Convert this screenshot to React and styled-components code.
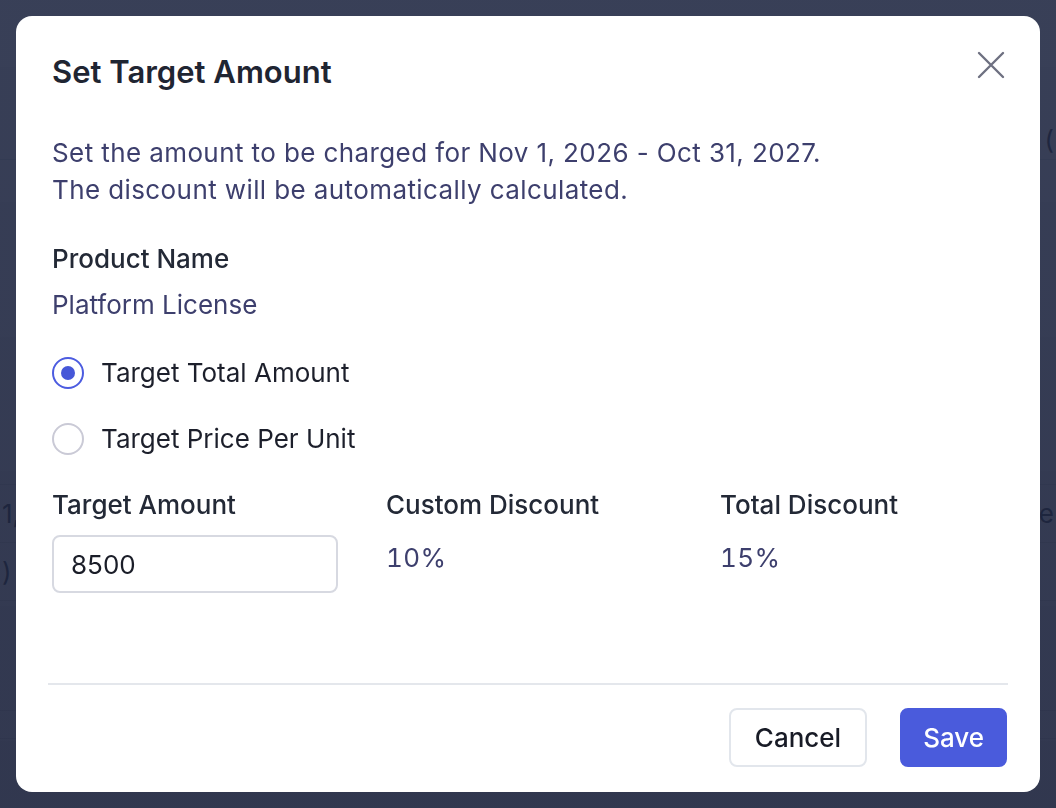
import React, { useState } from "react";
import styled, { createGlobalStyle } from "styled-components";

const GlobalStyle = createGlobalStyle`
  html, body {
    margin: 0;
    padding: 0;
    height: 100%;
  }
  body {
    font-family: Inter, "Noto Sans", "Liberation Sans", sans-serif;
    background: #f5f6f8;
  }
  * {
    box-sizing: border-box;
  }
`;

const Page = styled.div`
  width: 1056px;
  height: 808px;
  overflow: hidden;
  padding-top: 120px;
`;

const BgRow = styled.div`
  height: ${(p) => p.h}px;
  border-bottom: 1px solid #d4d8e0;
  display: flex;
  align-items: center;
  justify-content: space-between;
  padding: 0 2px;
  font-size: 26px;
  color: #2b3142;
`;

const Overlay = styled.div`
  position: fixed;
  inset: 0;
  background: linear-gradient(180deg, rgba(30, 38, 64, 0.88), rgba(28, 35, 60, 0.9));
  display: flex;
  align-items: flex-start;
  justify-content: center;
  padding-top: 16px;
`;

const Modal = styled.div`
  width: 1024px;
  height: 776px;
  background: #ffffff;
  border-radius: 16px;
  display: flex;
  flex-direction: column;
`;

const Header = styled.div`
  display: flex;
  justify-content: space-between;
  align-items: flex-start;
  padding: 38px 34px 0 36px;
`;

const Title = styled.h2`
  margin: 0;
  font-size: 31px;
  font-weight: 600;
  color: #1f2532;
  line-height: 36px;
`;

const CloseButton = styled.button`
  border: none;
  background: none;
  padding: 0;
  width: 30px;
  height: 30px;
  display: flex;
  align-items: center;
  justify-content: center;
  cursor: pointer;
  margin-top: -4px;
  color: #6e7081;
`;

const Body = styled.div`
  flex: 1;
  padding: 0 36px;
`;

const Description = styled.p`
  margin: 44px 0 0;
  font-size: 26px;
  line-height: 37px;
  color: #3d3f6d;
  letter-spacing: 0.4px;
`;

const FieldLabel = styled.div`
  font-size: 26px;
  font-weight: 500;
  color: #232936;
  line-height: 30px;
  margin-top: ${(p) => p.top || 0}px;
`;

const FieldValue = styled.div`
  font-size: 26px;
  color: #3d3f6d;
  line-height: 30px;
  margin-top: ${(p) => p.top || 0}px;
  letter-spacing: ${(p) => (p.numeric ? "0.4px" : "0")};
  font-variant-numeric: ${(p) => (p.numeric ? "tabular-nums" : "normal")};
`;

const RadioGroup = styled.div`
  display: flex;
  flex-direction: column;
  gap: 34px;
  margin-top: 37px;
`;

const RadioRow = styled.label`
  display: flex;
  align-items: center;
  gap: 17px;
  cursor: pointer;
  font-size: 26px;
  color: #1c1f2b;
  line-height: 32px;
`;

const RadioCircle = styled.span`
  width: 32px;
  height: 32px;
  border-radius: 50%;
  border: 2px solid ${(p) => (p.checked ? "#4c5ce0" : "#cacad6")};
  display: flex;
  align-items: center;
  justify-content: center;
  flex-shrink: 0;

  &::after {
    content: "";
    width: 14px;
    height: 14px;
    border-radius: 50%;
    background: #4657d8;
    display: ${(p) => (p.checked ? "block" : "none")};
  }
`;

const Columns = styled.div`
  display: grid;
  grid-template-columns: 334px 334px 1fr;
  margin-top: 35px;
`;

const Column = styled.div`
  display: flex;
  flex-direction: column;
`;

const AmountInput = styled.input`
  margin-top: 15px;
  width: 286px;
  height: 58px;
  border: 2px solid #d7d9e1;
  border-radius: 8px;
  padding: 0 17px;
  font-family: inherit;
  font-size: 26px;
  color: #1a1d28;
  outline: none;
`;

const Divider = styled.div`
  height: 2px;
  background: #e4e7ec;
  margin: 0 32px;
`;

const Footer = styled.div`
  display: flex;
  justify-content: flex-end;
  gap: 33px;
  padding: 23px 33px 25px;
`;

const Button = styled.button`
  height: 59px;
  padding: 0 ${(p) => (p.primary ? 21 : 24)}px;
  border-radius: 8px;
  font-family: inherit;
  font-size: 26px;
  font-weight: 500;
  cursor: pointer;
  border: 2px solid ${(p) => (p.primary ? "#4a5bdc" : "#e2e6ec")};
  background: ${(p) => (p.primary ? "#4a5bdc" : "#ffffff")};
  color: ${(p) => (p.primary ? "#ffffff" : "#181b26")};
`;

function CloseIcon() {
  return (
    <svg width="28" height="28" viewBox="0 0 28 28" fill="none">
      <path
        d="M2 2 L26 26 M26 2 L2 26"
        stroke="currentColor"
        strokeWidth="2.4"
        strokeLinecap="round"
      />
    </svg>
  );
}

export default function App() {
  const [mode, setMode] = useState("total");
  const [amount, setAmount] = useState("8500");

  return (
    <>
      <GlobalStyle />
      <Page>
        <BgRow h={40}>
          <span />
          <span>(</span>
        </BgRow>
        <BgRow h={325} />
        <BgRow h={58}>
          <span>1,</span>
          <span>e</span>
        </BgRow>
        <BgRow h={58}>
          <span>)</span>
          <span />
        </BgRow>
        <BgRow h={110} />
        <BgRow h={28} />
      </Page>
      <Overlay>
        <Modal>
          <Header>
            <Title>Set Target Amount</Title>
            <CloseButton aria-label="Close">
              <CloseIcon />
            </CloseButton>
          </Header>
          <Body>
            <Description>
              Set the amount to be charged for Nov 1, 2026 - Oct 31, 2027.
              <br />
              The discount will be automatically calculated.
            </Description>
            <FieldLabel top={36}>Product Name</FieldLabel>
            <FieldValue top={16}>Platform License</FieldValue>
            <RadioGroup>
              <RadioRow onClick={() => setMode("total")}>
                <RadioCircle checked={mode === "total"} />
                Target Total Amount
              </RadioRow>
              <RadioRow onClick={() => setMode("unit")}>
                <RadioCircle checked={mode === "unit"} />
                Target Price Per Unit
              </RadioRow>
            </RadioGroup>
            <Columns>
              <Column>
                <FieldLabel>Target Amount</FieldLabel>
                <AmountInput
                  value={amount}
                  onChange={(e) => setAmount(e.target.value)}
                />
              </Column>
              <Column>
                <FieldLabel>Custom Discount</FieldLabel>
                <FieldValue top={23} numeric>
                  10%
                </FieldValue>
              </Column>
              <Column>
                <FieldLabel>Total Discount</FieldLabel>
                <FieldValue top={23} numeric>
                  15%
                </FieldValue>
              </Column>
            </Columns>
          </Body>
          <Divider />
          <Footer>
            <Button>Cancel</Button>
            <Button primary>Save</Button>
          </Footer>
        </Modal>
      </Overlay>
    </>
  );
}
